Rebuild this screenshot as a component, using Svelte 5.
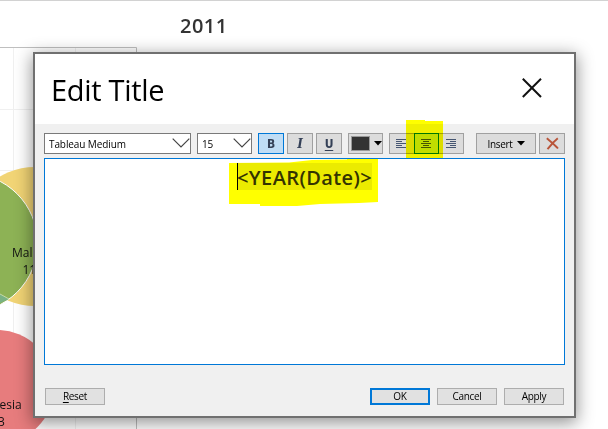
<script>
  const gridY = [109, 170, 232, 294, 355, 417];
  const gridX = [13, 75];
</script>

<main>
  <svg class="chart" width="608" height="429" aria-hidden="true">
    <path d="M0 .5H608" stroke="#d2d2d2" />
    {#each gridY as y}<path d="M0 {y + 0.5}H136" stroke="#f0f0f0" />{/each}
    {#each gridX as x}<path d="M{x + 0.5} 48V429" stroke="#f0f0f0" />{/each}
    <path d="M0 47.5H136.500V429" fill="none" stroke="#bfbfbf" />
    <circle cx="35" cy="236.500" r="69.500" fill="#f1d475" />
    <circle cx="-32" cy="243" r="69.500" fill="#8db255" stroke="#fff" />
    <path d="M0 294L9 299L0 303Z" fill="#79b284" />
    <path d="M0 294L9 299" stroke="#c5d8a5" />
    <circle cx="-3" cy="387" r="57" fill="#e77c7d" />
    <g class="marks">
      <text x="12" y="257">Malaysia</text>
      <text x="22.500" y="274">11</text>
      <text x="-.5" y="409">esia</text>
      <text x="-2" y="426">3</text>
    </g>
  </svg>

  <h2>2011</h2>

  <section class="dialog">
    <header>
      <h1>Edit Title</h1>
      <svg width="20" height="20" viewBox="0 0 20 20"><path d="M.8.8L19 19M19 .8L.8 19" stroke="#111" stroke-width="2" /></svg>
    </header>
    <div class="body">
      <div class="toolbar">
        <div class="select font"><span>Tableau Medium</span><svg width="18" height="10"><path d="M.7.700L9 9L17.300.700" /></svg></div>
        <div class="select size"><span>15</span><svg width="18" height="10"><path d="M.7.700L9 9L17.300.700" /></svg></div>
        <button class="tool bold active">B</button>
        <button class="tool italic">I</button>
        <button class="tool under">U</button>
        <button class="tool color"><i></i><svg width="8" height="5"><path d="M0 0H8L4 4.500Z" /></svg></button>
        <div class="aligns">
          <button><svg width="12" height="10"><path d="M0 .5h10M0 2.500h6M0 4.500h10M0 6.500h6M0 8.500h10" /></svg></button>
          <button class="on"><svg width="11" height="10"><path d="M0 .5h10M2 2.500h6M0 4.500h10M2 6.500h6M0 8.500h10" /></svg></button>
          <button><svg width="10" height="10"><path d="M0 .5h10M4 2.500h6M0 4.500h10M4 6.500h6M0 8.500h10" /></svg></button>
          <span class="marker"></span>
        </div>
        <button class="tool insert">Insert<svg width="8" height="5"><path d="M0 0H8L4 4.500Z" /></svg></button>
        <button class="tool clear"><svg width="13" height="13"><path d="M.8 1.200C4 4 9 8 12 11.500M11.800 1.200C7 5 4 9 1.500 12.200" fill="none" stroke="#b9553a" stroke-width="1.900" /></svg></button>
      </div>
      <div class="editor">
        <p><span>&lt;YEAR(Date)&gt;</span></p>
        <svg class="stroke" width="149" height="47"><path d="M0 4L60 3.500L83 1L118 .500V0H149V43L130 44L91 45L68 47H31V45H0Z" fill="#ff0" /></svg>
      </div>
      <footer>
        <button class="reset"><span><u>R</u>eset</span></button>
        <button class="ok">OK</button>
        <button>Cancel</button>
        <button>Apply</button>
      </footer>
    </div>
  </section>
</main>

<style>
  :global(body) { margin: 0; background: #fff; }
  * { box-sizing: border-box; }
  main { position: relative; width: 608px; height: 429px; overflow: hidden; font-family: "Open Sans", "Noto Sans", sans-serif; }
  svg { display: block; flex: none; }
  .chart { position: absolute; inset: 0; }
  .marks { font: 500 12px "Open Sans", sans-serif; fill: #111; }
  h2 { position: absolute; left: 180px; top: 12px; margin: 0; font-size: 20px; line-height: 28px; font-weight: 650; color: #333; letter-spacing: .5px; }
  .dialog { position: absolute; left: 33px; top: 52px; width: 543px; height: 366px; border: 2px solid #707070; background: #f0f0f0; box-shadow: 0 4px 16px 1px rgba(0,0,0,.42); }
  header { height: 70px; padding: 0 32px 0 16px; display: flex; justify-content: space-between; background: #fff; }
  h1 { margin: 16px 0 0; font-size: 29px; line-height: 40px; font-weight: 400; color: #000; white-space: nowrap; letter-spacing: -.3px; }
  header svg { margin-top: 24px; }
  .body { padding: 9px 9px 0; }
  .toolbar { height: 21px; display: flex; }
  button { padding: 0; margin: 0; font: 500 10px "Open Sans", sans-serif; letter-spacing: -.3px; color: #000; border: 1px solid #a0a0a0; background: #dcdcdc; display: flex; align-items: center; justify-content: center; }
  .select { background: #fff; border: 1px solid #7a7a7a; height: 21px; display: flex; align-items: center; justify-content: space-between; padding-left: 4px; font-size: 10px; letter-spacing: -.1px; font-weight: 500; white-space: nowrap; color: #000; }
  .select span { padding-top: 1px; }
  .select svg { margin-bottom: 1px; }
  .select svg path { fill: none; stroke: #444; stroke-width: 1.200; }
  .font { width: 147px; margin-right: 6px; }
  .size { width: 55px; margin-right: 6px; }
  .tool { width: 26px; height: 21px; margin-right: 3px; }
  .bold, .italic, .under { color: #344057; font-size: 12px; font-weight: 700; }
  .bold, .under { font-family: "DejaVu Sans Condensed", "DejaVu Sans", sans-serif; font-stretch: condensed; }
  .italic { font-family: "DejaVu Serif", serif; font-style: italic; }
  .under { text-decoration: underline; text-underline-offset: 2px; }
  .active { border-color: #0078d7; background: #c0ddf5; }
  .color { width: 35px; margin: 0 6px 0 3px; justify-content: flex-start; padding-left: 2px; gap: 4px; }
  .color i { width: 19px; height: 15px; background: #333; border: 1px solid #999; }
  .aligns { position: relative; width: 75px; height: 21px; display: flex; margin-right: 12px; }
  .aligns button { width: 25px; height: 21px; }
  .aligns button:first-child { border-right: 0; }
  .aligns button:nth-child(3) { border-left: 0; }
  .aligns button.on { border-color: #0078d7; background: #c0ddf5; }
  .aligns path { stroke: #465672; }
  .marker { position: absolute; left: 17px; top: -13px; width: 37px; height: 43px; background: #ff0; mix-blend-mode: multiply; clip-path: polygon(0 0, 19px 0, 19px 1px, 100% 1px, 100% 100%, 4px 100%, 4px 42px, 0 42px); }
  .insert { width: 60px; gap: 4px; }
  .clear { margin: 0; }
  .editor { position: relative; width: 521px; height: 207px; margin-top: 4px; border: 1px solid #0078d7; background: #fff; }
  p { margin: 0; padding-top: 4px; text-align: center; }
  p span { display: inline-block; height: 27px; line-height: 30px; width: 135px; border-left: 1px solid #000; background: #ebebeb; color: #333; font-size: 20px; font-weight: 600; text-indent: -1px; text-align: left; letter-spacing: .4px; white-space: nowrap; }
  .stroke { position: absolute; left: 184px; top: 0; mix-blend-mode: multiply; }
  footer { display: flex; gap: 7px; margin-top: 23px; padding: 0 1px; }
  footer button { width: 60px; height: 17px; padding-bottom: 1px; background: #e1e1e1; border-color: #adadad; }
  .reset { margin-right: auto; }
  .reset u { text-underline-offset: 2px; }
  .ok { border: 2px solid #0078d7; }
</style>
